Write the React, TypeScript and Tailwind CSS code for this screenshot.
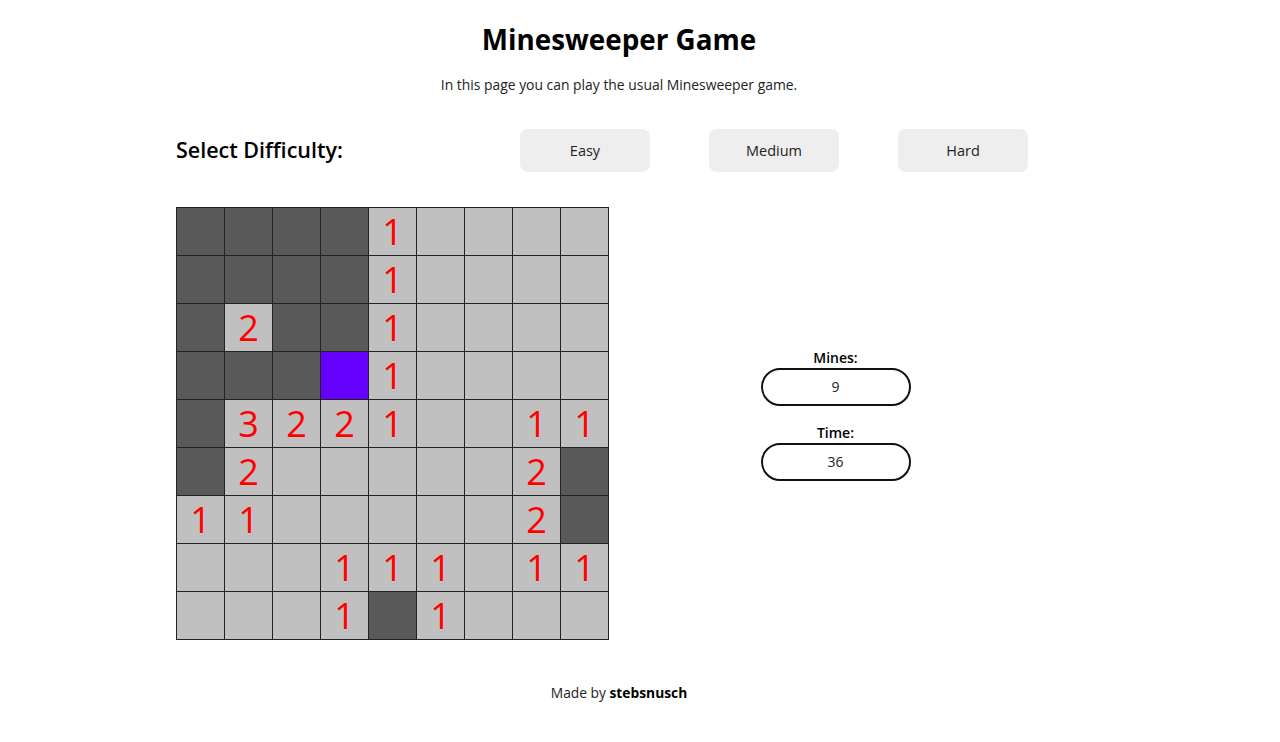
import React from "react";

type Cell = "D" | "L" | "P" | number;

const board: Cell[][] = [
  ["D", "D", "D", "D", 1, "L", "L", "L", "L"],
  ["D", "D", "D", "D", 1, "L", "L", "L", "L"],
  ["D", 2, "D", "D", 1, "L", "L", "L", "L"],
  ["D", "D", "D", "P", 1, "L", "L", "L", "L"],
  ["D", 3, 2, 2, 1, "L", "L", 1, 1],
  ["D", 2, "L", "L", "L", "L", "L", 2, "D"],
  [1, 1, "L", "L", "L", "L", "L", 2, "D"],
  ["L", "L", "L", 1, 1, 1, "L", 1, 1],
  ["L", "L", "L", 1, "D", 1, "L", "L", "L"],
];

function Tile({ value }: { value: Cell }) {
  if (value === "D") return <div className="w-[47px] h-[47px] bg-[#595959]" />;
  if (value === "P") return <div className="w-[47px] h-[47px] bg-[#6600ff]" />;
  return (
    <div className="w-[47px] h-[47px] bg-[#c0c0c0] flex items-center justify-center text-[36px] leading-none text-[#ff0000]">
      {typeof value === "number" ? value : ""}
    </div>
  );
}

function Stat({ label, value }: { label: string; value: string }) {
  return (
    <div className="flex flex-col items-center">
      <div className="text-sm font-semibold leading-5 text-black">{label}</div>
      <div className="w-[150px] h-[38px] border-2 border-[#111] rounded-[19px] flex items-center justify-center text-sm text-[#222]">
        {value}
      </div>
    </div>
  );
}

export default function App() {
  return (
    <div
      className="min-h-screen bg-white text-[#111]"
      style={{ fontFamily: '"Open Sans", "Noto Sans", sans-serif' }}
    >
      <div className="w-[886px] ml-[176px] flex flex-col">
        <h1 className="mt-[20px] text-center text-[27.8px] leading-[38px] font-bold text-black">
          Minesweeper Game
        </h1>
        <p className="mt-[17px] text-center text-[13.9px] leading-5 text-[#222]">
          In this page you can play the usual Minesweeper game.
        </p>

        {/* Difficulty */}
        <div className="mt-[34px] flex items-center">
          <h2 className="text-[21.5px] font-semibold text-black">Select Difficulty:</h2>
          <div className="ml-auto mr-[34px] flex gap-[59px]">
            {["Easy", "Medium", "Hard"].map((d) => (
              <button
                key={d}
                className="w-[130px] h-[43px] rounded-lg bg-[#eeeeee] text-[14.5px] text-[#222]"
              >
                {d}
              </button>
            ))}
          </div>
        </div>

        {/* Game */}
        <div className="mt-[35px] flex items-center">
          <div className="grid grid-cols-9 gap-px p-px bg-[#222] w-[433px]">
            {board.flat().map((c, i) => (
              <Tile key={i} value={c} />
            ))}
          </div>
          <div className="flex-1 flex flex-col items-center gap-[17px] mt-[-18px]">
            <Stat label="Mines:" value="9" />
            <Stat label="Time:" value="36" />
          </div>
        </div>

        <footer className="mt-[43px] text-center text-[13.8px] leading-5 text-[#222]">
          Made by <span className="font-bold text-black">stebsnusch</span>
        </footer>
      </div>
    </div>
  );
}
